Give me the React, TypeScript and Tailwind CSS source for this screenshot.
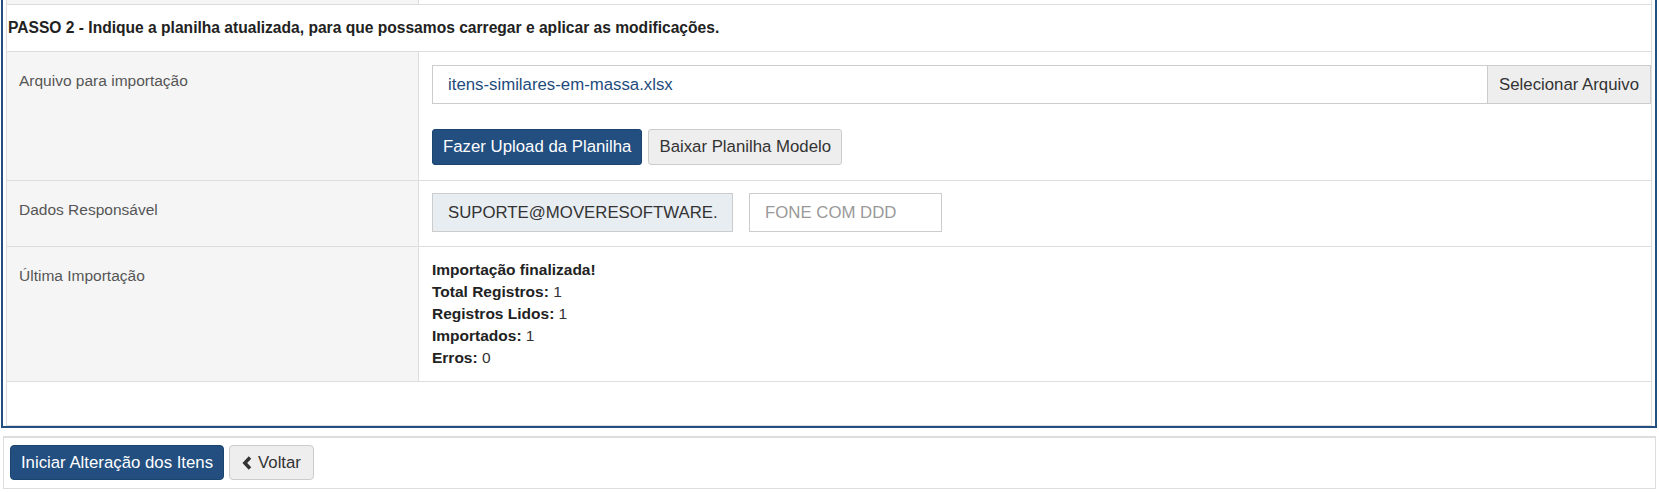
import React from "react";

const font = "font-['Liberation_Sans',Arial,sans-serif]";

function Label({ children }: { children: React.ReactNode }) {
  return (
    <div className="bg-[#f5f5f5] border-r border-[#ddd] pl-[12px] pt-[18px] text-[15.5px] leading-[22px] text-[#555]">
      {children}
    </div>
  );
}

export default function App() {
  return (
    <div className={`${font} bg-white w-[1659px] h-[493px] overflow-hidden`}>
      <div className="ml-px w-[1656px] border-x-2 border-b-2 border-[#224e80] px-[3px]">
        <div className="border-x border-b border-[#ddd]">
          {/* tail of previous row */}
          <div className="grid grid-cols-[412px_1fr] h-[4px]">
            <div className="bg-[#f5f5f5] border-r border-[#ddd]" />
            <div />
          </div>

          <div className="h-[47px] border-t border-[#ddd] pl-px pt-[12px] text-[15.6px] leading-[22px] font-bold text-[#222]">
            PASSO 2 - Indique a planilha atualizada, para que possamos carregar e aplicar as modificações.
          </div>

          {/* arquivo */}
          <div className="grid grid-cols-[412px_1fr] h-[129px] border-t border-[#ddd]">
            <Label>Arquivo para importação</Label>
            <div className="pl-[13px] pt-[13px]">
              <div className="flex h-[39px] text-[16.8px]">
                <div className="flex-1 flex items-center border border-[#ccc] pl-[15px] text-[#1e4b7c]">
                  itens-similares-em-massa.xlsx
                </div>
                <button className="border border-l-0 border-[#ccc] bg-[#eee] px-[11px] text-[#333]">
                  Selecionar Arquivo
                </button>
              </div>
              <div className="flex gap-[6px] mt-[25px] text-[16.8px]">
                <button className="h-[36px] rounded-[3px] border border-[#1b4470] bg-[#224e80] px-[10px] text-white">
                  Fazer Upload da Planilha
                </button>
                <button className="h-[36px] rounded-[3px] border border-[#ccc] bg-[#eee] px-[10px] text-[#333]">
                  Baixar Planilha Modelo
                </button>
              </div>
            </div>
          </div>

          {/* responsavel */}
          <div className="grid grid-cols-[412px_1fr] h-[66px] border-t border-[#ddd]">
            <Label>Dados Responsável</Label>
            <div className="flex gap-[16px] pl-[13px] pt-[12px] text-[16.8px]">
              <div className="w-[301px] h-[39px] flex items-center overflow-hidden whitespace-nowrap border border-[#ccc] bg-[#e8edf2] px-[15px] text-[#333]">
                SUPORTE@MOVERESOFTWARE.
              </div>
              <div className="w-[193px] h-[39px] flex items-center border border-[#ccc] px-[15px] text-[#999]">
                FONE COM DDD
              </div>
            </div>
          </div>

          {/* ultima importacao */}
          <div className="grid grid-cols-[412px_1fr] h-[135px] border-t border-[#ddd]">
            <Label>Última Importação</Label>
            <div className="pl-[13px] pt-[12px] text-[15.5px] leading-[22px] text-[#333]">
              <div className="font-bold text-[#222]">Importação finalizada!</div>
              <div><span className="font-bold text-[#222]">Total Registros:</span> 1</div>
              <div><span className="font-bold text-[#222]">Registros Lidos:</span> 1</div>
              <div><span className="font-bold text-[#222]">Importados:</span> 1</div>
              <div><span className="font-bold text-[#222]">Erros:</span> 0</div>
            </div>
          </div>

          <div className="h-[44px] border-t border-[#ddd]" />
        </div>
      </div>

      <div className="mt-[8px] ml-[3px] w-[1653px] h-[53px] border border-t-2 border-[#ddd] pl-[6px] pt-[7px]">
        <div className="flex gap-[5px] text-[16.8px]">
          <button className="h-[35px] w-[214px] rounded-[4px] border border-[#1b4470] bg-[#224e80] text-white">
            Iniciar Alteração dos Itens
          </button>
          <button className="h-[35px] w-[85px] rounded-[4px] border border-[#ccc] bg-[#eee] text-[#333] flex items-center justify-center gap-[5px]">
            <svg width="11" height="14" viewBox="0 0 11 14">
              <path d="M8 1.5 L2.8 7 L8 12.5" fill="none" stroke="#333" strokeWidth="3.4" strokeLinejoin="miter" />
            </svg>
            Voltar
          </button>
        </div>
      </div>
    </div>
  );
}
